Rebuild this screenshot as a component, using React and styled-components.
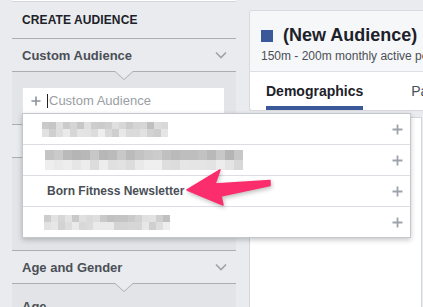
import React from 'react';
import styled, { createGlobalStyle } from 'styled-components';

const GlobalStyle = createGlobalStyle`
  html, body { margin: 0; padding: 0; }
  body {
    background: #e9ebee;
    font-family: "Liberation Sans", Arial, Helvetica, sans-serif;
  }
`;

const Page = styled.div`
  display: flex;
  width: 423px;
  height: 307px;
  overflow: hidden;
  position: relative;
  background: #e9ebee;
`;

const Sidebar = styled.div`
  width: 224px;
  margin-left: 12px;
  flex-shrink: 0;
  display: flex;
  flex-direction: column;

  & > * { flex-shrink: 0; }
`;

const TopSliver = styled.div`
  height: 1px;
  background: #fff;
  border-bottom: 1px solid #d3d6db;
`;

const Title = styled.div`
  height: 36px;
  padding-left: 10px;
  display: flex;
  align-items: center;
  font-size: 12px;
  font-weight: bold;
  color: #1d2129;
  letter-spacing: 0.1px;
`;

const SectionHeader = styled.div`
  height: 32px;
  border-top: 1px solid #a9adb4;
  padding: 0 9px 0 10px;
  display: flex;
  align-items: center;
  justify-content: space-between;
  font-size: 13px;
  font-weight: bold;
  color: #4b4f56;
  background: #e9ebee;
`;

const SectionBody = styled.div`
  position: relative;
  border-top: 1px solid #a9adb4;
  background: #e3e4e7;
  height: ${p => p.$h}px;
  box-sizing: border-box;

  &::before, &::after {
    content: '';
    position: absolute;
    left: 103px;
    width: 0;
    height: 0;
    border-left: 9px solid transparent;
    border-right: 9px solid transparent;
  }
  &::before { top: 0; border-top: 8px solid #a9adb4; }
  &::after { top: -1px; border-top: 8px solid #e9ebee; }
`;

const BodyLabel = styled.div`
  font-size: 13px;
  font-weight: bold;
  color: #4b4f56;
  padding: 15px 0 0 10px;
`;

const InputWrap = styled.div`
  position: relative;
  margin: 15px 11px 0 10px;
`;

const InputBox = styled.div`
  height: 26px;
  background: #fff;
  border: 1px solid #e4e5e8;
  border-bottom: none;
  box-sizing: border-box;
  display: flex;
  align-items: center;
  padding-left: 8px;
`;

const Caret = styled.span`
  width: 1px;
  height: 14px;
  background: #1d2129;
  margin-left: 6px;
`;

const Placeholder = styled.span`
  font-size: 13px;
  color: #9a9ea5;
  margin-left: 1px;
`;

const Dropdown = styled.div`
  position: absolute;
  top: 100%;
  left: 0;
  width: 387px;
  background: #fff;
  border: 1px solid #c4c7cc;
  box-shadow: 0 2px 5px rgba(0, 0, 0, 0.22);
  z-index: 5;
`;

const Row = styled.div`
  height: 30px;
  display: flex;
  align-items: center;
  justify-content: space-between;
  padding: 0 7px 0 ${p => p.$indent}px;
  border-top: ${p => (p.$first ? 'none' : '1px solid #dcdee3')};
  font-size: 12px;
  font-weight: bold;
  color: #4b4f56;
`;

const Mosaic = styled.div`
  display: grid;
  grid-template-columns: repeat(${p => p.$cols}, ${p => p.$cw}px);
  grid-auto-rows: ${p => p.$rh}px;
`;

const Cell = styled.span`
  display: block;
`;

const RightCol = styled.div`
  flex: 1;
  min-width: 0;
  margin-left: 13px;
  padding-top: 10px;
  display: flex;
  flex-direction: column;
  gap: 6px;
`;

const Card = styled.div`
  border: 1px solid #d8dade;
  border-right: none;
  border-radius: 3px 0 0 3px;
  background: #fff;
  overflow: hidden;
  flex-shrink: 0;
`;

const CardHead = styled.div`
  height: 61px;
  background: #f6f7f9;
  border-bottom: 1px solid #dddfe2;
  padding: 14px 0 0 11px;
  box-sizing: border-box;
`;

const HeadTitle = styled.div`
  display: flex;
  align-items: center;
  font-size: 18px;
  font-weight: bold;
  color: #1d2129;
  white-space: nowrap;
`;

const Swatch = styled.span`
  width: 12px;
  height: 12px;
  background: #3b5998;
  margin-right: 10px;
  flex-shrink: 0;
`;

const HeadSub = styled.div`
  font-size: 12px;
  color: #4b4f56;
  white-space: nowrap;
  margin-top: 3px;
`;

const TabBar = styled.div`
  height: 38px;
  display: flex;
  align-items: stretch;
`;

const Tab = styled.div`
  margin-left: ${p => p.$ml}px;
  padding-top: 3px;
  display: flex;
  align-items: center;
  font-size: 14px;
  font-weight: ${p => (p.$active ? 'bold' : 'normal')};
  color: ${p => (p.$active ? '#1d2129' : '#4b4f56')};
  border-bottom: 4px solid ${p => (p.$active ? '#3b5998' : 'transparent')};
  white-space: nowrap;
`;

const TabDivider = styled.span`
  width: 1px;
  height: 22px;
  background: #dddfe2;
  margin-left: 19px;
  align-self: center;
`;

const LowerCard = styled.div`
  flex: 1;
  margin-right: 1px;
  background: #fff;
  border: 1px solid #d3d6db;
  border-bottom: none;
`;

const ArrowLayer = styled.svg`
  position: absolute;
  left: 180px;
  top: 164px;
  z-index: 10;
  filter: drop-shadow(1px 2px 2px rgba(0, 0, 0, 0.25));
`;

const Chevron = () => (
  <svg width="12" height="8" viewBox="0 0 12 8">
    <path d="M1 1.5 L6 6.5 L11 1.5" fill="none" stroke="#9ea2a9" strokeWidth="1.6" />
  </svg>
);

const Plus = ({ size = 11, color = '#9ea3ab' }) => (
  <svg width={size} height={size} viewBox="0 0 11 11">
    <path d="M5.5 0.5 V10.5 M0.5 5.5 H10.5" stroke={color} strokeWidth="1.8" />
  </svg>
);

const grays = (seed, n, lo, hi) => {
  let s = seed;
  const out = [];
  for (let i = 0; i < n; i++) {
    s = (s * 9301 + 49297) % 233280;
    const v = Math.round(lo + (s / 233280) * (hi - lo));
    out.push(`rgb(${v},${v},${v})`);
  }
  return out;
};

const Blurred = ({ seed, cols, cw, rh, top, bottom }) => {
  const a = grays(seed, cols, top[0], top[1]);
  const b = grays(seed + 7, cols, bottom[0], bottom[1]);
  return (
    <Mosaic $cols={cols} $cw={cw} $rh={rh}>
      {a.concat(b).map((c, i) => (
        <Cell key={i} style={{ background: c }} />
      ))}
    </Mosaic>
  );
};

const audiences = [
  { blur: { seed: 3, cols: 18, cw: 7, rh: 7.5, top: [190, 225], bottom: [205, 238] }, indent: 19 },
  { blur: { seed: 11, cols: 22, cw: 9, rh: 10, top: [178, 205], bottom: [215, 240] }, indent: 22 },
  { label: 'Born Fitness Newsletter', indent: 24 },
  { blur: { seed: 29, cols: 18, cw: 7, rh: 7.5, top: [192, 228], bottom: [205, 238] }, indent: 21 },
];

export default function App() {
  return (
    <>
      <GlobalStyle />
      <Page>
        <Sidebar>
          <TopSliver />
          <Title>CREATE AUDIENCE</Title>
          <SectionHeader>
            Custom Audience
            <Chevron />
          </SectionHeader>
          <SectionBody $h={53}>
            <InputWrap>
              <InputBox>
                <Plus size={10} color="#8d949e" />
                <Caret />
                <Placeholder>Custom Audience</Placeholder>
              </InputBox>
              <Dropdown>
                {audiences.map((a, i) => (
                  <Row key={i} $first={i === 0} $indent={a.indent}>
                    {a.label ? a.label : <Blurred {...a.blur} />}
                    <Plus />
                  </Row>
                ))}
              </Dropdown>
            </InputWrap>
          </SectionBody>
          <SectionHeader>
            Lookalike Audience
            <Chevron />
          </SectionHeader>
          <SectionBody $h={93} />
          <SectionHeader>
            Age and Gender
            <Chevron />
          </SectionHeader>
          <SectionBody $h={40}>
            <BodyLabel>Age</BodyLabel>
          </SectionBody>
        </Sidebar>

        <RightCol>
          <Card>
            <CardHead>
              <HeadTitle>
                <Swatch />
                (New Audience)
              </HeadTitle>
              <HeadSub>150m - 200m monthly active people</HeadSub>
            </CardHead>
            <TabBar>
              <Tab $active $ml={16}>Demographics</Tab>
              <TabDivider />
              <Tab $ml={29}>Page Likes</Tab>
            </TabBar>
          </Card>
          <LowerCard />
        </RightCol>

        <ArrowLayer width="95" height="46" viewBox="0 0 95 46">
          <path
            d="M7 26 L40 6 L35 20 L90 16.5 L90 21.5 L41 32 L43 41 Z"
            fill="#fb2d6c"
            stroke="#fb2d6c"
            strokeWidth="1.5"
            strokeLinejoin="round"
          />
        </ArrowLayer>
      </Page>
    </>
  );
}
